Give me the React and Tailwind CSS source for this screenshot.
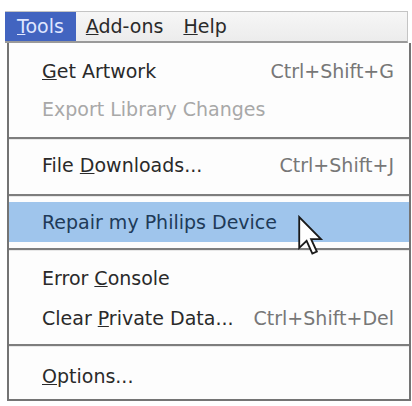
import React from "react";

const font = { fontFamily: '"DejaVu Sans", Verdana, sans-serif' };

function Item({ children, shortcut, h, disabled }) {
  return (
    <div
      className={`flex items-center justify-between pl-[33px] pr-[15px] ${h}`}
    >
      <span className={disabled ? "text-[#a8a8a8]" : "text-[#2a2a2a]"}>{children}</span>
      {shortcut && <span className="text-[#777777]">{shortcut}</span>}
    </div>
  );
}

function Sep({ cls }) {
  return (
    <div className={cls}>
      <div className="h-[2px] bg-[#7e7e7e]" />
      <div className="h-[1px] bg-[#e8e8e8]" />
    </div>
  );
}

function Cursor() {
  return (
    <svg
      className="absolute left-[297px] top-[215px]"
      width="27"
      height="41"
      viewBox="0 0 13 20"
    >
      <path
        d="M1 1 L1 16 L4.6 12.6 L7.4 18.8 L9.6 17.8 L6.8 11.8 L11.6 11.8 Z"
        fill="#ffffff"
        stroke="#1a1a1a"
        strokeWidth="0.9"
        strokeLinejoin="miter"
      />
    </svg>
  );
}

export default function App() {
  return (
    <div className="relative w-[412px] h-[406px] bg-white pt-[11px] pl-[5px] text-[19px] leading-none" style={font}>
      {/* Menu bar */}
      <div className="flex h-[32px] w-[403px] border-t border-r border-[#c4c4c4] bg-gradient-to-b from-[#f6f6f6] to-[#ececec] border-b-2 border-b-[#9a9a9a]">
        <div className="flex items-center bg-[#4264c0] px-[12px] text-[#dfe6ff]">
          <span><span className="underline">T</span>ools</span>
        </div>
        <div className="flex items-center px-[10px] text-[#2a2a2a]">
          <span><span className="underline">A</span>dd-ons</span>
        </div>
        <div className="flex items-center px-[10px] text-[#2a2a2a]">
          <span><span className="underline">H</span>elp</span>
        </div>
      </div>

      {/* Dropdown */}
      <div className="ml-[2px] w-[404px] border-l-2 border-r-2 border-b-2 border-[#747474] bg-[#fdfdfd] pt-[9px] pb-[2px]">
        <Item h="h-[38px]" shortcut="Ctrl+Shift+G">
          <span className="underline">G</span>et Artwork
        </Item>
        <Item h="h-[38px]" disabled>Export Library Changes</Item>
        <Sep cls="pt-[9px] pb-[6px]" />
        <Item h="h-[39px]" shortcut="Ctrl+Shift+J">
          File <span className="underline">D</span>ownloads...
        </Item>
        <Sep cls="pt-[9px] pb-[5px]" />
        <div className="flex h-[40px] items-center bg-[#9fc5ec] pl-[33px] text-[#203a58]">
          Repair my Philips Device
        </div>
        <Sep cls="pt-[6px] pb-[7px]" />
        <Item h="h-[40px]">
          Error <span className="underline">C</span>onsole
        </Item>
        <Item h="h-[40px]" shortcut="Ctrl+Shift+Del">
          Clear <span className="underline">P</span>rivate Data...
        </Item>
        <Sep cls="pt-[6px] pb-[8px]" />
        <Item h="h-[42px]">
          <span className="underline">O</span>ptions...
        </Item>
      </div>

      <Cursor />
    </div>
  );
}
